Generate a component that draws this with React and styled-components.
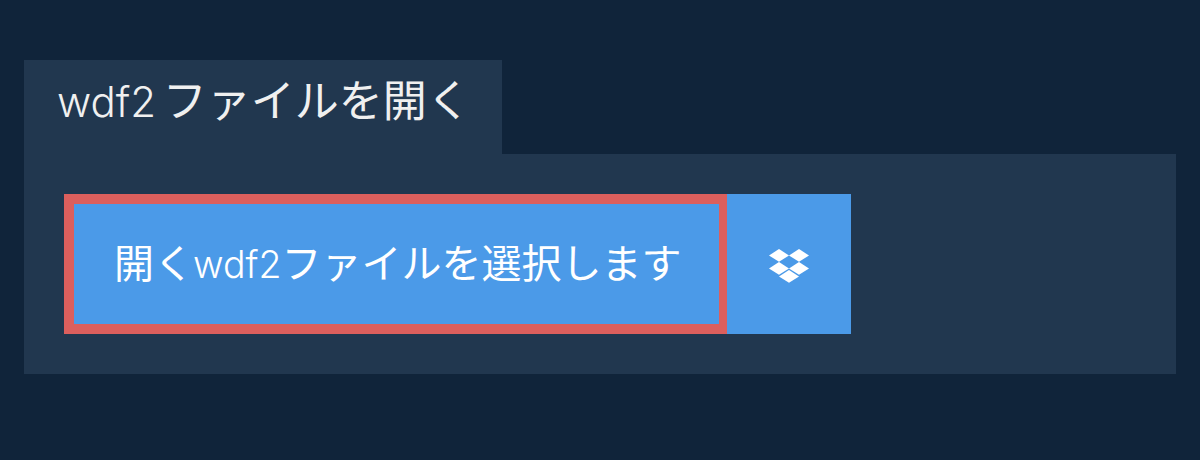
import React from 'react';
import styled, { createGlobalStyle } from 'styled-components';

const GlobalStyle = createGlobalStyle`
	html, body {
		margin:0;
		background-color:#10243a;
	}
	body {
		font-family:"Liberation Sans", "Noto Sans CJK JP", sans-serif;
	}
`

const Page = styled.div`
	height:460px;
	padding:60px 24px 0;
	box-sizing:border-box;
`
const TabTitle = styled.h1`
	display:inline-block;
	vertical-align:top;
	margin:0;
	width:478px;
	height:94px;
	box-sizing:border-box;
	padding:11px 0 0 33px;
	background-color:#21374f;
	color:#f0f0f0;
	font-family:"Noto Sans CJK JP", sans-serif;
	font-size:44px;
	font-weight:400;
	line-height:54px;
	white-space:nowrap;
`
const Latin = styled.span`
	margin-left:${props=>props.shift || 0}px;
	font-family:Inter, sans-serif;
	font-size:${props=>props.size}px;
	font-weight:300;
	word-spacing:-5px;
`
const Panel = styled.div`
	display:flex;
	height:220px;
	box-sizing:border-box;
	padding:40px;
	background-color:#21374f;
`
const SelectButton = styled.button`
	width:663px;
	height:140px;
	box-sizing:border-box;
	padding:0 0 6px 40px;
	border:solid #dc5f5d;
	border-width:10px 8px 10px 10px;
	background-color:#4b9ae8;
	color:#fff;
	font-family:"Noto Sans CJK JP", sans-serif;
	font-size:40px;
	font-weight:400;
	text-align:left;
	white-space:nowrap;
`
const DropboxButton = styled.button`
	display:flex;
	align-items:center;
	justify-content:center;
	width:124px;
	height:140px;
	padding:4px 0 0;
	border:0;
	background-color:#4b9ae8;
	color:#fff;
`

function DropboxIcon(){
	return (
		<svg width="40" height="34" viewBox="0 0 40 34" fill="currentColor">
			<path d="M10 0 L20 6.4 L10 12.8 L0 6.4 Z" />
			<path d="M30 0 L40 6.4 L30 12.8 L20 6.4 Z" />
			<path d="M10 13 L20 19.4 L10 25.8 L0 19.4 Z" />
			<path d="M30 13 L40 19.4 L30 25.8 L20 19.4 Z" />
			<path d="M20 21 L30 27.4 L20 33.8 L10 27.4 Z" />
		</svg>
	)
}

export default function App(){
	return (
		<Page>
			<GlobalStyle />
			<TabTitle><Latin size={42}>wdf2 </Latin>ファイルを開く</TabTitle>
			<Panel>
				<SelectButton>開く<Latin size={37.5} shift={-1}>wdf2</Latin>ファイルを選択します</SelectButton>
				<DropboxButton aria-label="Dropbox"><DropboxIcon /></DropboxButton>
			</Panel>
		</Page>
	)
}
